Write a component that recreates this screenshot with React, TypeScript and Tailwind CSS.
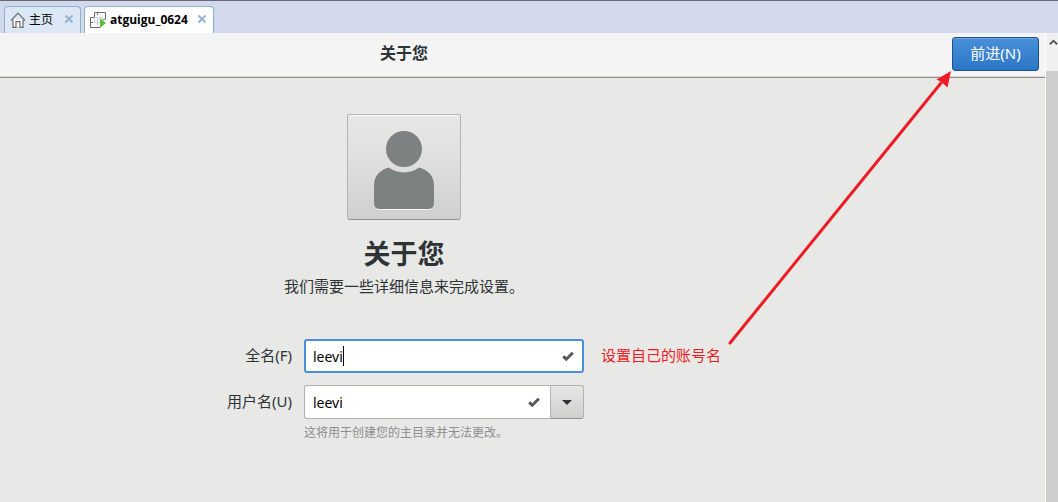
import { useState } from 'react'

function HomeIcon() {
  return (
    <svg className="h-4 w-4 shrink-0" viewBox="0 0 16 16" fill="#fff" stroke="#6b6b6b" strokeWidth={1.2}>
      <path d="M3 7.500v7.900h10V7.500" />
      <path d="M0.8 8.600L8 1.200l7.200 7.400" fill="none" />
      <path d="M6 15.400V9.600h4v5.800" />
    </svg>
  )
}

function MachineIcon() {
  return (
    <svg className="h-4 w-4 shrink-0 overflow-visible" viewBox="0 0 16 16" fill="none">
      <path d="M4.500 5V0.500h11V7" stroke="#6b6b6b" />
      <path d="M4.500 5.500h-4v10H10" stroke="#6b6b6b" />
      <path d="M0.500 10.500H3M7.500 0.500V3M15.500 7.500H13" stroke="#6b6b6b" />
      <path d="M4.500 5.500V10.500H10M7.500 5v8M4.500 5.500H12M12 3v4" stroke="#c6d3e8" />
      <path d="M10 6L16 11L10 16Z" fill="#5cc13c" />
    </svg>
  )
}

function CloseIcon() {
  return (
    <svg className="h-2 w-2" viewBox="0 0 8 8" stroke="#94b4cf" strokeWidth={2}>
      <path d="M0.500 0.500l7 7M7.500 0.500l-7 7" />
    </svg>
  )
}

function CheckMark() {
  return (
    <svg className="h-3 w-3 shrink-0" viewBox="0 0 12 12" fill="none" stroke="#555a5b" strokeWidth={3}>
      <path d="M1.200 6.300L4.300 9.200L10.800 2.800" />
    </svg>
  )
}

function TabBar() {
  return (
    <nav className="flex h-[33px] shrink-0 items-end gap-[3px] border-t border-[#6a6870] bg-[#d3d9ec] pl-1">
      <div className="flex h-[27px] w-[77px] items-center rounded-t-[4px] border border-b-0 border-[#8fb0cc] bg-[#dce7f5] pr-[7px] pl-[5px]">
        <button type="button" className="flex items-center gap-[3px] text-[12px] text-black">
          <HomeIcon />
          主页
        </button>
        <button type="button" aria-label="关闭主页" className="ml-auto pb-[2px]">
          <CloseIcon />
        </button>
      </div>
      <div className="flex h-[27px] w-[130px] items-center rounded-t-[4px] border border-b-0 border-[#8fb0cc] bg-white pr-[7px] pl-[5px]">
        <button type="button" className="flex items-center gap-1 font-['Open_Sans',sans-serif] text-[12px] font-bold text-black">
          <MachineIcon />
          atguigu_0624
        </button>
        <button type="button" aria-label="关闭 atguigu_0624" className="ml-auto pb-[2px]">
          <CloseIcon />
        </button>
      </div>
    </nav>
  )
}

function Avatar() {
  return (
    <button
      type="button"
      aria-label="选择头像"
      className="flex h-[106px] w-[114px] items-center justify-center rounded-[3px] border border-[#b2b2ae] border-b-[#929290] bg-linear-to-b from-[#e7e7e6] via-[#dededc] to-[#cfcfcd] shadow-[inset_0_1px_#fafafa]"
    >
      <svg className="h-20 w-16 overflow-visible" viewBox="0 0 64 80">
        <path
          d="M17 41C8 44 2 49 2 58V76q0 7 6 7H56q6 0 6-7V58C62 49 56 44 47 41C38 47.500 26 47.500 17 41Z"
          fill="#f4f4f3"
        />
        <g fill="#7d8181">
          <circle cx="32" cy="22" r="18" />
          <path d="M17 40.500C8 43 2 49 2 58V76q0 6 6 6H56q6 0 6-6V58C62 49 56 43 47 40.500C38 47 26 47 17 40.500Z" />
        </g>
      </svg>
    </button>
  )
}

function AccountForm() {
  const [fullName, setFullName] = useState('leevi')
  const [userName, setUserName] = useState('leevi')

  return (
    <form className="mt-10 grid grid-cols-[68px_280px] items-center gap-x-3 text-[15px] text-[#2e3436]">
      <label htmlFor="full-name" className="pb-[2px] text-right whitespace-nowrap">全名(F)</label>
      <div className="relative flex h-[34px] items-center rounded-[3px] border-2 border-[#4a90d9] bg-white pr-2 pl-[7px]">
        <input
          id="full-name"
          value={fullName}
          onChange={(e) => setFullName(e.target.value)}
          className="min-w-0 flex-1 text-[14px] text-black outline-none"
        />
        {/* text cursor */}
        <span className="absolute left-[37px] h-5 w-px bg-black" />
        <CheckMark />
        <p className="absolute left-full ml-[19px] pb-[2px] whitespace-nowrap text-[#ed1c24]">设置自己的账号名</p>
      </div>

      <label htmlFor="user-name" className="mt-3 pb-[2px] text-right whitespace-nowrap">用户名(U)</label>
      <div className="mt-3 flex h-[34px]">
        <div className="flex min-w-0 flex-1 items-center rounded-l-[3px] border border-r-0 border-[#b2b2ae] bg-white pr-[10px] pl-2">
          <input
            id="user-name"
            value={userName}
            onChange={(e) => setUserName(e.target.value)}
            className="min-w-0 flex-1 text-[14px] text-black outline-none"
          />
          <CheckMark />
        </div>
        <button
          type="button"
          aria-label="选择用户名"
          className="flex w-[34px] items-center justify-center rounded-r-[3px] border border-[#b2b2ae] border-b-[#929290] bg-linear-to-b from-[#e7e7e6] to-[#cfcfcd]"
        >
          <svg className="h-[5px] w-[10px]" viewBox="0 0 10 5" fill="#2e3436">
            <path d="M0 0h10L5 5z" />
          </svg>
        </button>
      </div>
      <p className="col-start-2 mt-1 text-[12px] leading-5 whitespace-nowrap text-[#8b8e8f]">
        这将用于创建您的主目录并无法更改。
      </p>
    </form>
  )
}

function Scrollbar() {
  return (
    <div className="flex w-[13px] shrink-0 flex-col overflow-hidden border-l border-white bg-[#f0f0f0]">
      <button type="button" aria-label="向上滚动" className="flex h-[38px] shrink-0 justify-center pt-[5px] pl-[3px]">
        <svg className="h-2 w-[10px]" viewBox="0 0 10 8" fill="none" stroke="#505050" strokeWidth={2}>
          <path d="M1 6.500l4-4 4 4" />
        </svg>
      </button>
      <div className="flex-1 bg-[#cdcdcd]" />
    </div>
  )
}

export default function App() {
  return (
    <div className="relative flex min-h-screen flex-col overflow-hidden bg-[#e8e8e6] font-['Noto_Sans','Noto_Sans_CJK_SC',sans-serif]">
      <TabBar />
      <div className="flex flex-1">
        <div className="min-w-0 flex-1">
          <header className="flex h-[45px] items-start border-b border-[#8e8e8a] bg-[#f4f4f4] pt-1 pr-[6px] shadow-[inset_0_-1px_#dcdcda]">
            <h1 className="flex-1 pr-[144px] text-center text-[16px] leading-8 font-bold text-[#2e3436]">关于您</h1>
            <button
              type="button"
              className="h-[34px] w-[87px] rounded-[3px] border border-[#1c5187] bg-linear-to-b from-[#4a90d9] to-[#2a76c6] pb-[2px] text-[15px] text-white shadow-[inset_0_1px_#6ba6e2]"
            >
              前进(N)
            </button>
          </header>
          <main className="flex flex-col items-center pt-9 pr-[237px]">
            <Avatar />
            <h2 className="mt-4 text-[27px] leading-9 font-bold text-[#2e3436]">关于您</h2>
            <p className="mt-[2px] mb-px text-[15px] leading-6 text-[#2e3436]">我们需要一些详细信息来完成设置。</p>
            <AccountForm />
          </main>
        </div>
        <Scrollbar />
      </div>
      <svg className="pointer-events-none absolute top-[71px] right-[107px] h-[274px] w-[223px]" viewBox="0 0 223 274">
        <path d="M2 272L213 12" stroke="#ed1c24" strokeWidth={3} strokeLinecap="round" />
        <path d="M223 0L208.500 8.500L213.500 11L219.500 16.500Z" fill="#ed1c24" />
      </svg>
    </div>
  )
}
